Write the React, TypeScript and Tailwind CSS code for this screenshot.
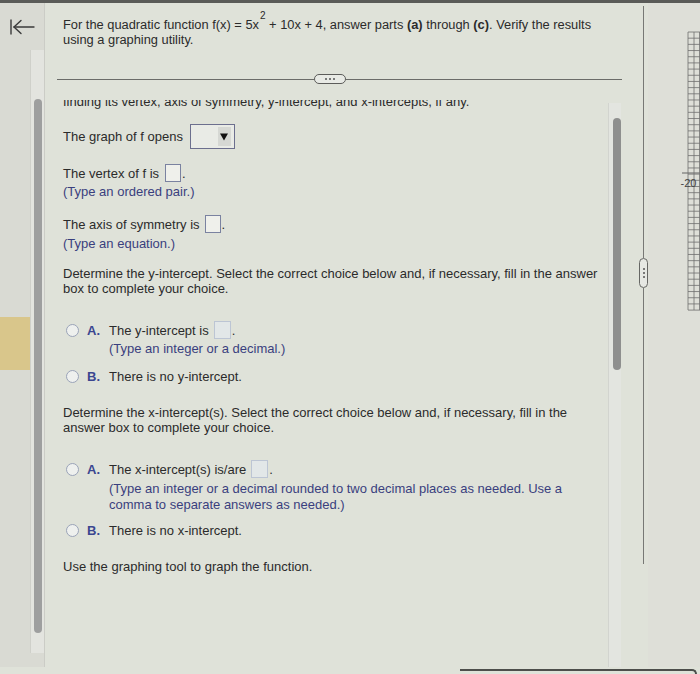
import React from "react";

const FONT = "font-['Liberation_Sans',Arial,Helvetica,sans-serif]";

function AnswerBox({ faded }: { faded?: boolean }) {
  return (
    <span
      className={
        faded
          ? "inline-block w-[17px] h-[18px] border border-[#bcc5d4] bg-[#e2e7e8]"
          : "inline-block w-[16px] h-[18px] border border-[#7a82a0] bg-[#eff0eb]"
      }
    />
  );
}

function Radio() {
  return (
    <span className="inline-block w-[13px] h-[13px] rounded-full border-[1.5px] border-[#9aa3b8] bg-[#eef0ee]" />
  );
}

function BackArrow() {
  return (
    <svg width="26" height="16" viewBox="0 0 26 16" fill="none" stroke="#3a3a3a" strokeWidth="1.4" strokeLinecap="round">
      <line x1="1" y1="1" x2="1" y2="15" />
      <line x1="4" y1="8" x2="24" y2="8" />
      <polyline points="11,1.5 4,8 11,14.5" />
    </svg>
  );
}

function Dots({ vertical }: { vertical?: boolean }) {
  return (
    <div className={vertical ? "flex flex-col items-center gap-[2px]" : "flex items-center gap-[2px]"}>
      <span className="w-[2px] h-[2px] rounded-full bg-[#555]" />
      <span className="w-[2px] h-[2px] rounded-full bg-[#555]" />
      <span className="w-[2px] h-[2px] rounded-full bg-[#555]" />
    </div>
  );
}

function GraphStrip() {
  const rows = Array.from({ length: 46 }, (_, i) => 1 + i * 6.18);
  return (
    <svg width="23" height="281" viewBox="0 0 23 281">
      <g stroke="#6e6e6e" strokeWidth="0.8">
        {rows.map((y) => (
          <line key={y} x1="11" y1={y} x2="23" y2={y} />
        ))}
        <line x1="11" y1="1" x2="11" y2="279" />
        <line x1="17" y1="1" x2="17" y2="279" />
        <line x1="22.5" y1="1" x2="22.5" y2="279" />
        <line x1="5" y1="142" x2="23" y2="142" strokeWidth="1.1" />
      </g>
      <text x="3.5" y="156" fontSize="11" fill="#444" fontFamily="Liberation Sans, Arial, sans-serif">
        -20
      </text>
    </svg>
  );
}

function Choice({
  letter,
  children,
  tall,
}: {
  letter: string;
  children: React.ReactNode;
  tall?: boolean;
}) {
  return (
    <div className={tall ? "flex items-center h-[18px]" : "flex items-center h-[15px]"}>
      <div className="w-[24px] pl-[3px] flex items-center">
        <Radio />
      </div>
      <div className="w-[22px] font-bold text-[#3b4690]">{letter}</div>
      <div className="flex items-center whitespace-nowrap">{children}</div>
    </div>
  );
}

export default function App() {
  return (
    <div className={`w-[700px] h-[674px] overflow-hidden flex flex-col bg-[#dfe2d9] text-[13px] leading-[15px] text-[#2b2b2b] ${FONT}`}>
      <div className="h-[3px] bg-[#5a5b58]" />

      <div className="flex flex-1 min-h-0">
        {/* left rail */}
        <div className="w-[45px] flex flex-col border-r border-[#cbccc6] bg-[#d9dad3]">
          <div className="h-[47px] pt-[16px] pl-[10px]">
            <BackArrow />
          </div>
          <div className="flex">
            <div className="w-[30px]">
              <div className="mt-[267px] h-[53px] w-[32px] bg-[#d9c68b]" />
            </div>
            <div className="w-[14px] h-[603px] bg-[#e3e4df] border-l border-[#cfd0ca]">
              <div className="mt-[49px] ml-[3px] w-[8px] h-[534px] rounded-full bg-[#9e9f9f]" />
            </div>
          </div>
        </div>

        {/* question area */}
        <div className="w-[594px] flex flex-col">
          <div className="pl-[18px] pt-[14px] whitespace-nowrap text-[12.85px]">
            <div>
              For the quadratic function f(x) = 5x
              <sup className="text-[10px] leading-[0] align-[5px] ml-[1px]">2</sup> + 10x + 4, answer parts{" "}
              <b>(a)</b> through <b>(c)</b>. Verify the results
            </div>
            <div>using a graphing utility.</div>
          </div>

          <div className="ml-[12px] mr-[17px] mt-[27px] h-[10px] flex items-center">
            <div className="w-[257px] h-px bg-[#6b6c69]" />
            <div className="w-[32px] h-[10px] rounded-full border border-[#5c5c5a] bg-[#e8eae5] flex items-center justify-center">
              <Dots />
            </div>
            <div className="flex-1 h-px bg-[#6b6c69]" />
          </div>

          <div className="mt-[16px] flex flex-1 min-h-0 overflow-hidden">
            <div className="flex-1 pl-[18px] whitespace-nowrap">
              <div className="mt-[-6px]">
                finding its vertex, axis of symmetry, y-intercept, and x-intercepts, if any.
              </div>

              <div className="mt-[15px] h-[25px] flex items-center">
                <span>The graph of f opens</span>
                <div className="ml-[7px] w-[45px] h-[25px] border border-[#6c6f8e] bg-[#e9ebe6] flex items-center justify-end pr-[3px]">
                  <div className="w-[13px] h-[19px] bg-[#d6d8d4] flex items-center justify-center">
                    <svg width="8" height="8" viewBox="0 0 8 8">
                      <polygon points="0,0.5 8,0.5 4,7.5" fill="#111" />
                    </svg>
                  </div>
                </div>
              </div>

              <div className="mt-[15px] h-[18px] flex items-center">
                <span>The vertex of f is</span>
                <span className="ml-[6px] flex">
                  <AnswerBox />
                </span>
                <span className="ml-[1px]">.</span>
              </div>
              <div className="mt-[2px] text-[#3a3f7e]">(Type an ordered pair.)</div>

              <div className="mt-[16px] h-[18px] flex items-center">
                <span>The axis of symmetry is</span>
                <span className="ml-[5px] flex">
                  <AnswerBox />
                </span>
                <span className="ml-[1px]">.</span>
              </div>
              <div className="mt-[3px] text-[#3a3f7e]">(Type an equation.)</div>

              <div className="mt-[15px]">
                <div>
                  Determine the y-intercept. Select the correct choice below and, if necessary, fill in the answer
                </div>
                <div>box to complete your choice.</div>
              </div>

              <div className="mt-[25px]">
                <Choice letter="A." tall>
                  <span>The y-intercept is</span>
                  <span className="ml-[5px] flex">
                    <AnswerBox faded />
                  </span>
                  <span className="ml-[1px]">.</span>
                </Choice>
                <div className="mt-[2px] pl-[46px] text-[#3a3f7e]">(Type an integer or a decimal.)</div>
              </div>

              <div className="mt-[13px]">
                <Choice letter="B.">There is no y-intercept.</Choice>
              </div>

              <div className="mt-[21px]">
                <div>
                  Determine the x-intercept(s). Select the correct choice below and, if necessary, fill in the
                </div>
                <div>answer box to complete your choice.</div>
              </div>

              <div className="mt-[25px]">
                <Choice letter="A." tall>
                  <span>The x-intercept(s) is/are</span>
                  <span className="ml-[5px] flex">
                    <AnswerBox faded />
                  </span>
                  <span className="ml-[1px]">.</span>
                </Choice>
                <div className="mt-[3px] pl-[46px] leading-[16px] text-[#3a3f7e]">
                  <div>
                    (Type an integer or a decimal rounded to two decimal places as needed. Use a
                  </div>
                  <div>comma to separate answers as needed.)</div>
                </div>
              </div>

              <div className="mt-[10px]">
                <Choice letter="B.">There is no x-intercept.</Choice>
              </div>

              <div className="mt-[21px]">Use the graphing tool to graph the function.</div>
            </div>

            {/* inner scrollbar */}
            <div className="w-[13px] mr-[18px] mt-[3px] bg-[#e3e5e0] border-l border-[#d2d4cf]">
              <div className="mt-[15px] ml-[4px] w-[8px] h-[252px] rounded-full bg-[#8e8f8e]" />
            </div>
          </div>
        </div>

        {/* divider with grip */}
        <div className="w-[9px] flex flex-col items-center pt-[3px]">
          <div className="w-px h-[252px] bg-[#777875]" />
          <div className="w-[9px] h-[30px] rounded-full border border-[#666764] bg-[#e6e8e3] flex items-center justify-center">
            <Dots vertical />
          </div>
          <div className="w-px h-[276px] bg-[#777875]" />
        </div>

        {/* graph panel */}
        <div className="flex-1 bg-[#dedfd8] pl-[29px] pt-[28px]">
          <GraphStrip />
        </div>
      </div>

      <div className="h-[7px] flex items-end">
        <div className="ml-[460px] mr-[3px] flex-1 h-[5px] border-t-2 border-r-2 rounded-tr-[6px] border-[#4d4e4b]" />
      </div>
    </div>
  );
}
